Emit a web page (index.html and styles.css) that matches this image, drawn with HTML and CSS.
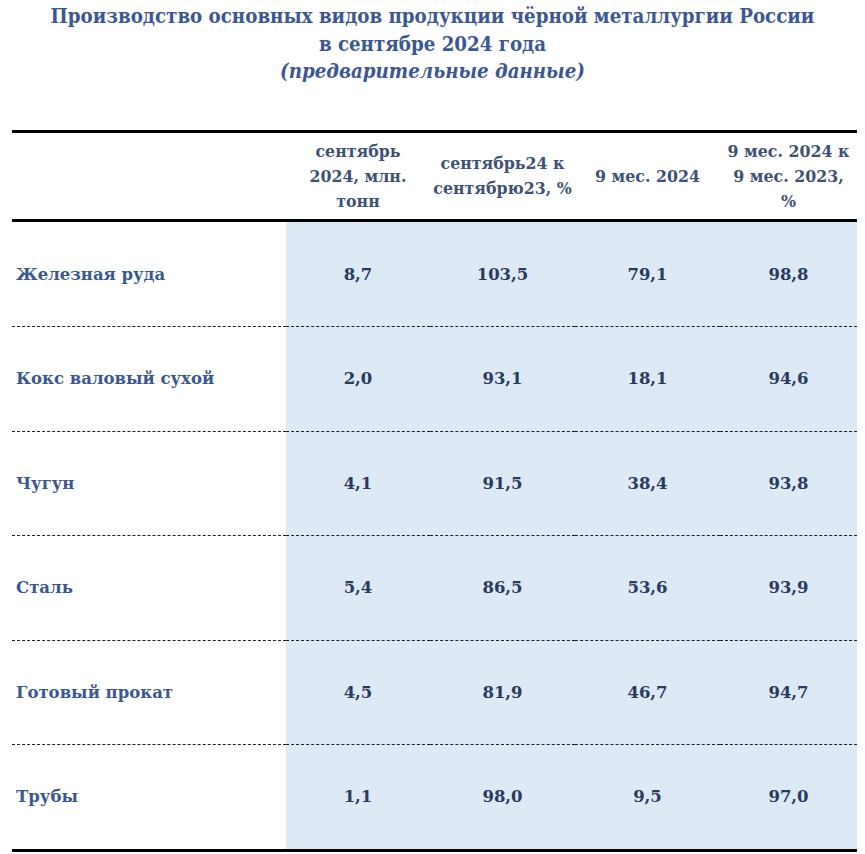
FILE: index.html
```html
<!DOCTYPE html>
<html lang="ru">
<head>
<meta charset="utf-8">
<title>Производство черной металлургии</title>
<link rel="stylesheet" href="styles.css">
</head>
<body>
<div class="page">
  <div class="title">
    <div class="title-line">Производство основных видов продукции чёрной металлургии России</div>
    <div class="title-line">в сентябре 2024 года</div>
    <div class="title-line italic">(предварительные данные)</div>
  </div>
  <table class="data">
    <colgroup>
      <col class="c-label">
      <col class="c1">
      <col class="c2">
      <col class="c3">
      <col class="c4">
    </colgroup>
    <thead>
      <tr>
        <th></th>
        <th>сентябрь<br>2024, млн.<br>тонн</th>
        <th>сентябрь24 к<br>сентябрю23, %</th>
        <th>9 мес. 2024</th>
        <th>9 мес. 2024 к<br>9 мес. 2023,<br>%</th>
      </tr>
    </thead>
    <tbody>
      <tr><td class="label">Железная руда</td><td>8,7</td><td>103,5</td><td>79,1</td><td>98,8</td></tr>
      <tr><td class="label">Кокс валовый сухой</td><td>2,0</td><td>93,1</td><td>18,1</td><td>94,6</td></tr>
      <tr><td class="label">Чугун</td><td>4,1</td><td>91,5</td><td>38,4</td><td>93,8</td></tr>
      <tr><td class="label">Сталь</td><td>5,4</td><td>86,5</td><td>53,6</td><td>93,9</td></tr>
      <tr><td class="label">Готовый прокат</td><td>4,5</td><td>81,9</td><td>46,7</td><td>94,7</td></tr>
      <tr><td class="label">Трубы</td><td>1,1</td><td>98,0</td><td>9,5</td><td>97,0</td></tr>
    </tbody>
  </table>
</div>
</body>
</html>
```
FILE: styles.css
```css
html, body {
  margin: 0;
  padding: 0;
  background: #ffffff;
}

.page {
  width: 865px;
  padding-top: 3px;
}

.title {
  text-align: center;
  font-family: "DejaVu Serif", "Liberation Serif", serif;
  font-stretch: condensed;
  font-weight: bold;
  font-size: 20.3px;
  line-height: 27.7px;
  color: #3b5893;
}

.title .italic {
  font-style: italic;
}

.data {
  margin: 44px 0 0 12px;
  width: 845px;
  border-collapse: collapse;
  table-layout: fixed;
  font-family: "DejaVu Serif", "Liberation Serif", serif;
  font-weight: bold;
}

.c-label { width: 274px; }
.c1 { width: 144px; }
.c2 { width: 145px; }
.c3 { width: 145px; }
.c4 { width: 137px; }

.data thead tr {
  border-top: 3px solid #000;
  border-bottom: 3px solid #000;
}

.data th {
  height: 86px;
  padding: 0;
  font-size: 15.8px;
  line-height: 25px;
  color: #3d5275;
  text-align: center;
  vertical-align: middle;
  font-weight: bold;
}

.data tbody td {
  height: 103.5px;
  padding: 0;
  font-size: 16.5px;
  color: #2b3b5e;
  text-align: center;
  vertical-align: middle;
  background: #dde9f5;
  border-top: 1px dashed #222;
}

.data tbody tr:first-child td {
  border-top: none;
  height: 104px;
}

.data tbody tr:last-child {
  border-bottom: 3px solid #000;
}

.data tbody td.label {
  background: #ffffff;
  text-align: left;
  padding-left: 4px;
  color: #3b5791;
}
```
